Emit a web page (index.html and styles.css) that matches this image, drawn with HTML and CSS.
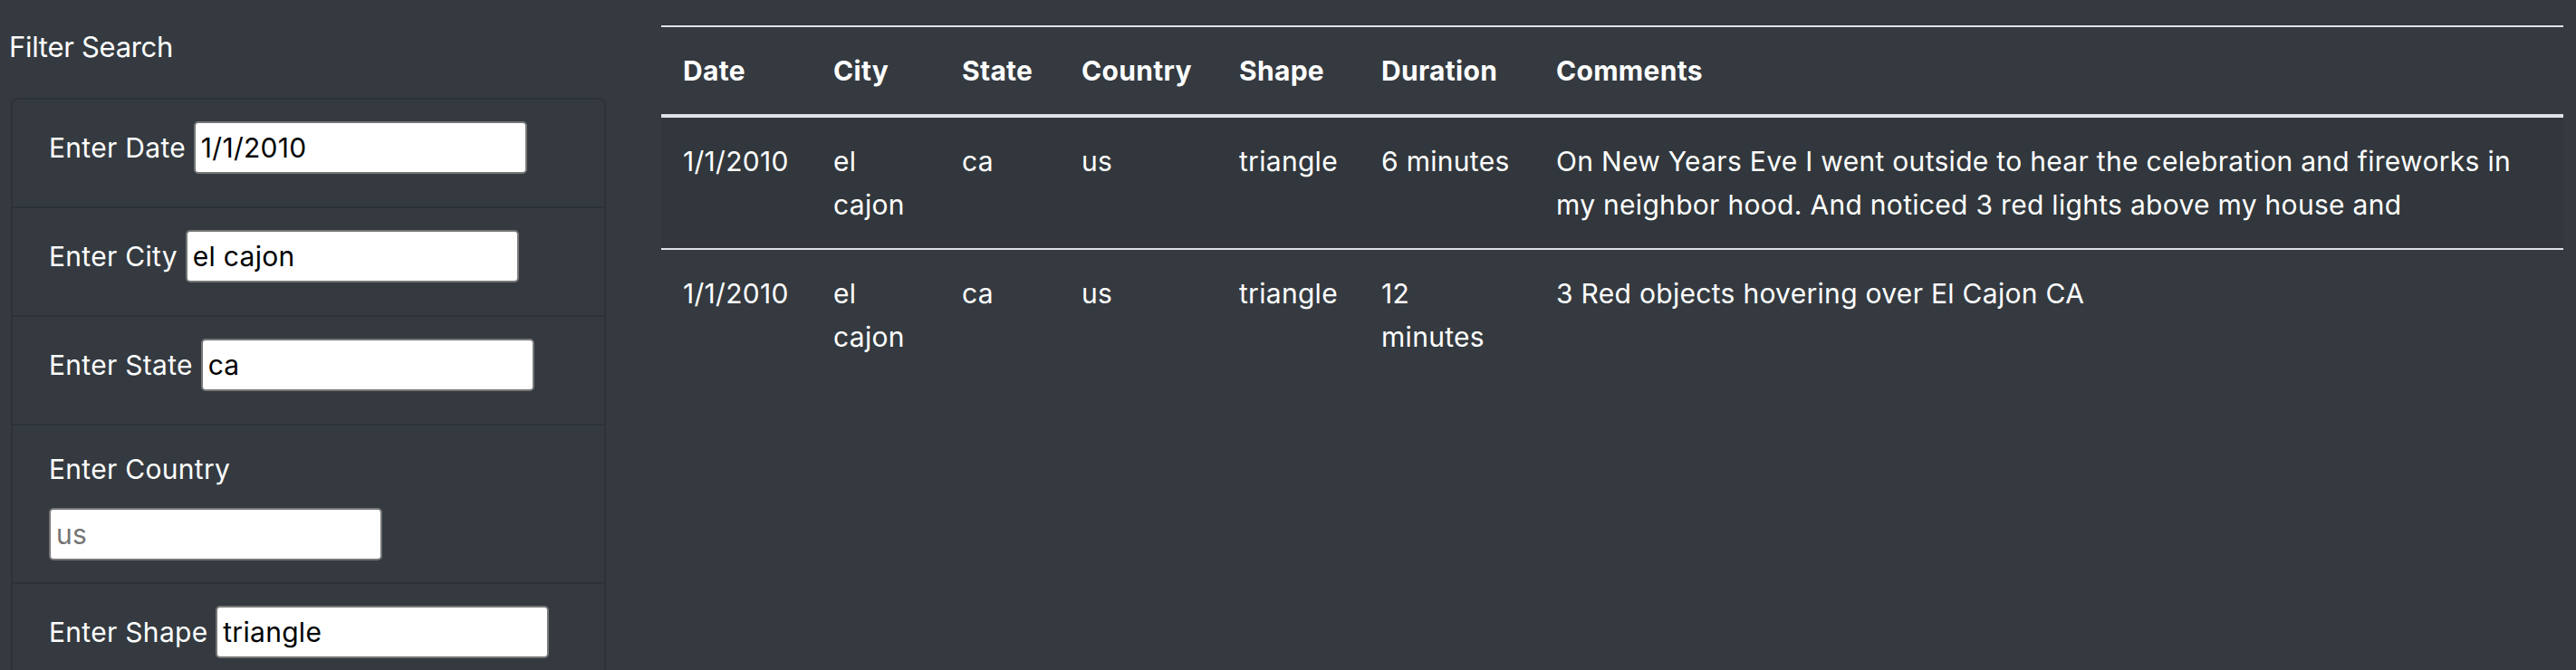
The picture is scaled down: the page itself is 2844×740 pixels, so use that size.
FILE: index.html
```html
<!DOCTYPE html>
<html lang="en">
<head>
<meta charset="utf-8">
<title>UFO Sightings</title>
<link rel="stylesheet" href="styles.css">
</head>
<body>
<div class="page">
  <aside class="sidebar">
    <h2 class="sidebar-title">Filter Search</h2>
    <form class="filter-card">
      <ul class="filter-list">
        <li class="filter-item"><label class="filter-label" for="datetime">Enter Date</label> <input class="filter-input" id="datetime" type="text" value="1/1/2010"></li>
        <li class="filter-item"><label class="filter-label" for="city">Enter City</label> <input class="filter-input" id="city" type="text" value="el cajon"></li>
        <li class="filter-item"><label class="filter-label" for="state">Enter State</label> <input class="filter-input" id="state" type="text" value="ca"></li>
        <li class="filter-item filter-item--stacked"><label class="filter-label" for="country">Enter Country</label> <input class="filter-input" id="country" type="text" placeholder="us"></li>
        <li class="filter-item"><label class="filter-label" for="shape">Enter Shape</label> <input class="filter-input" id="shape" type="text" value="triangle"></li>
      </ul>
    </form>
  </aside>
  <main class="results">
    <table class="ufo-table">
      <colgroup>
        <col class="col-date">
        <col class="col-city">
        <col class="col-state">
        <col class="col-country">
        <col class="col-shape">
        <col class="col-duration">
        <col class="col-comments">
      </colgroup>
      <thead>
        <tr>
          <th>Date</th>
          <th>City</th>
          <th>State</th>
          <th>Country</th>
          <th>Shape</th>
          <th>Duration</th>
          <th>Comments</th>
        </tr>
      </thead>
      <tbody>
        <tr>
          <td>1/1/2010</td>
          <td>el cajon</td>
          <td>ca</td>
          <td>us</td>
          <td>triangle</td>
          <td>6 minutes</td>
          <td>On New Years Eve I went outside to hear the celebration and fireworks in my neighbor hood. And noticed 3 red lights above my house and</td>
        </tr>
        <tr>
          <td>1/1/2010</td>
          <td>el cajon</td>
          <td>ca</td>
          <td>us</td>
          <td>triangle</td>
          <td>12 minutes</td>
          <td>3 Red objects hovering over El Cajon CA</td>
        </tr>
      </tbody>
    </table>
  </main>
</div>
</body>
</html>
```

FILE: styles.css
```css
* {
  box-sizing: border-box;
}

html {
  overflow: hidden;
}

body {
  margin: 0;
  background: #343a40;
  color: #fff;
  font-family: Inter, "Noto Sans", sans-serif;
  font-size: 30px;
  line-height: 48px;
  letter-spacing: 0.3px;
}

.page {
  display: flex;
  align-items: flex-start;
}

.sidebar {
  flex: 0 0 659px;
  margin-left: 10px;
}

.sidebar-title {
  margin: 33px 0 37px;
  font-size: 31px;
  font-weight: 400;
  line-height: 38px;
  letter-spacing: -0.3px;
}

.filter-card {
  margin: 0 0 0 2px;
  border: 2px solid rgba(0, 0, 0, 0.125);
  border-radius: 8px;
}

.filter-list {
  list-style: none;
  margin: 0;
  padding: 0;
}

.filter-item {
  padding: 24px 40px;
  border-bottom: 2px solid rgba(0, 0, 0, 0.125);
}

.filter-item:last-child {
  border-bottom: 0;
}

.filter-label {
  display: inline-block;
  margin-bottom: 17px;
}

.filter-item--stacked .filter-label {
  display: block;
  margin-bottom: 19px;
}

.filter-input {
  width: 368px;
  height: 58px;
  padding: 0 6px;
  border: 2px solid #767676;
  border-radius: 5px;
  background: #fff;
  color: #000;
  font-family: inherit;
  font-size: 30px;
  letter-spacing: 0.3px;
  vertical-align: baseline;
}

.filter-input::placeholder {
  color: #757575;
}

.results {
  flex: 0 0 2100px;
  margin: 28px 0 0 61px;
}

.ufo-table {
  width: 100%;
  border-collapse: collapse;
  table-layout: fixed;
}

.col-date { width: 166px; }
.col-city { width: 142px; }
.col-state { width: 132px; }
.col-country { width: 174px; }
.col-shape { width: 157px; }
.col-duration { width: 193px; }

.ufo-table th,
.ufo-table td {
  padding: 24px;
  text-align: left;
  vertical-align: top;
  border-top: 2px solid #dee2e6;
}

.ufo-table thead th {
  vertical-align: bottom;
  border-bottom: 4px solid #dee2e6;
  font-weight: 700;
}

.ufo-table tbody tr:nth-of-type(odd) {
  background: rgba(0, 0, 0, 0.05);
}
```
